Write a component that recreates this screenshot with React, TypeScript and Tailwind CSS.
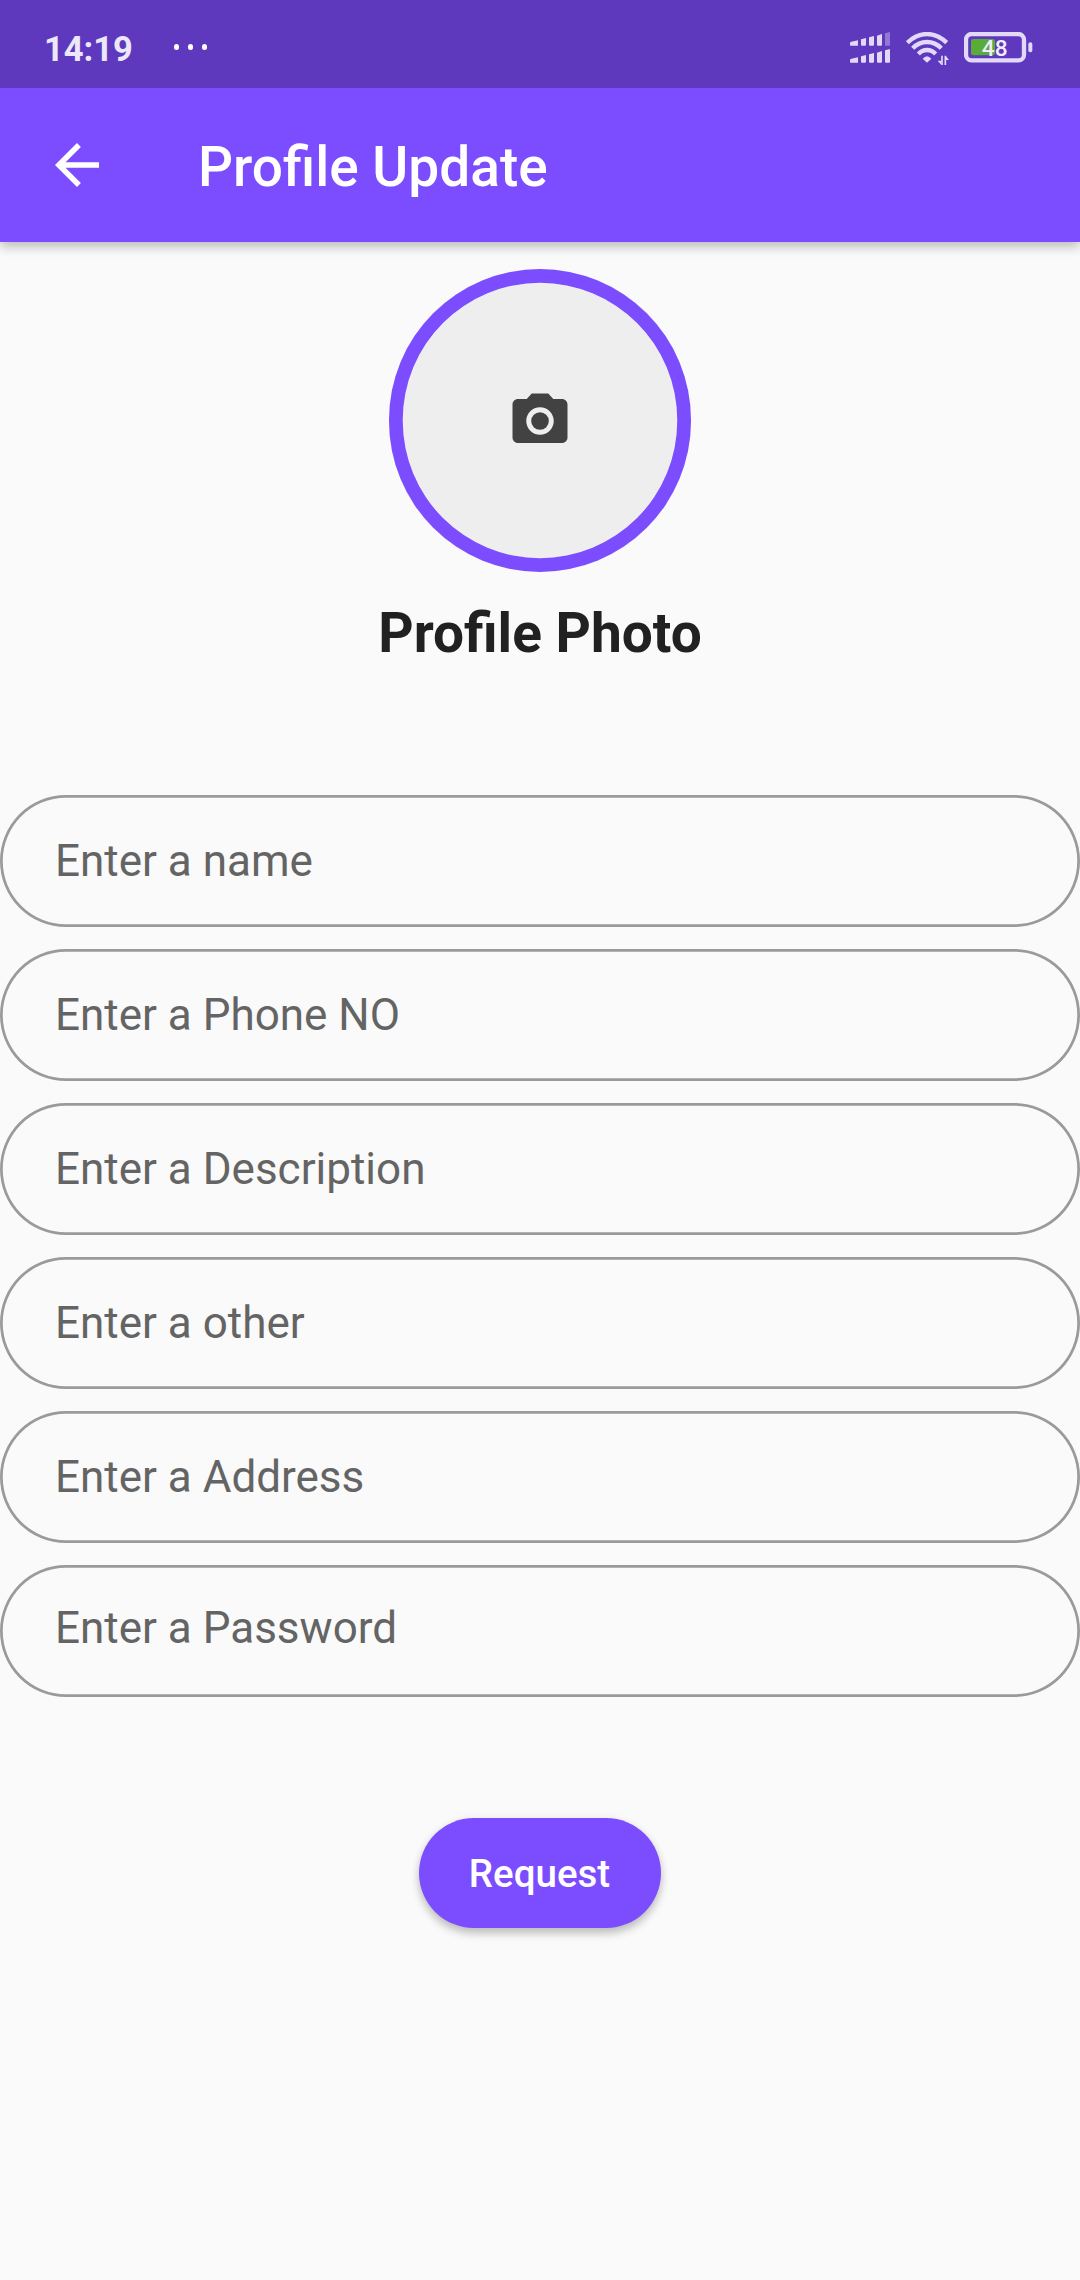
const fields = [
  { label: "Enter a name", type: "text" },
  { label: "Enter a Phone NO", type: "text" },
  { label: "Enter a Description", type: "text" },
  { label: "Enter a other", type: "text" },
  { label: "Enter a Address", type: "text" },
  { label: "Enter a Password", type: "password" },
];

function SignalIcon() {
  return (
    <svg className="h-8 w-10" viewBox="0 0 120 96" fill="#e2d8f8">
      <path d="M0 34q0-4 4-5l20-4v16H2q-2 0-2-2z" />
      <path d="M33 22l15-4v20q0 3-3 3H36q-3 0-3-3z" />
      <path d="M57 16l15-4v26q0 3-3 3H60q-3 0-3-3z" />
      <path d="M81 11l15-5v32q0 3-3 3H84q-3 0-3-3z" />
      <path d="M105 4l15-4v41h-15z" opacity=".4" />
      <path d="M0 85q0-4 4-5l20-4v16H2q-2 0-2-2z" />
      <path d="M33 73l15-4v20q0 3-3 3H36q-3 0-3-3z" />
      <path d="M57 67l15-4v26q0 3-3 3H60q-3 0-3-3z" />
      <path d="M81 62l15-5v32q0 3-3 3H84q-3 0-3-3z" />
      <path d="M105 55l15-4v38q0 3-3 3h-9q-3 0-3-3z" />
    </svg>
  );
}

function WifiIcon() {
  return (
    <svg className="h-[34px] w-11" viewBox="0 0 132 102" fill="none" stroke="#e2d8f8" strokeWidth="13">
      <path d="M4 32Q31 6 63 6t59 26" />
      <path d="M20 49Q38 30 63 30t43 19" />
      <path d="M37 66q11-12 26-12t26 12" />
      <path d="M50 80q13-15 26 0L63 92z" fill="#e2d8f8" stroke="none" />
      <path d="M108 71v28M118 71v28" strokeWidth="5" />
      <path d="M95 86h11v13zM119 71v13h10z" fill="#e2d8f8" stroke="none" />
    </svg>
  );
}

function BatteryIcon() {
  return (
    <svg className="h-[31px] w-[69px]" viewBox="0 0 207 93">
      <rect x="6" y="6" width="174" height="79" rx="17" fill="none" stroke="#e2d8f8" strokeWidth="13" />
      <rect x="21" y="21" width="72" height="49" rx="7" fill="#58ad36" />
      <rect x="193" y="31" width="12" height="30" rx="6" fill="#e2d8f8" />
      <text x="92" y="73" textAnchor="middle" fontFamily="Roboto, sans-serif" fontSize="68" fontWeight="500" fill="#f1ecfc">
        48
      </text>
    </svg>
  );
}

function StatusBar() {
  return (
    <div className="z-10 flex h-[88px] items-start justify-between bg-[#5e39bd] pr-[47px] pl-[44px]">
      <div className="flex items-start">
        <span className="mt-[28px] w-[130px] text-[34.5px] leading-[42px] font-bold text-[#ede7fb]">
          14:19
        </span>
        <div className="mt-[44px] flex gap-[9px]">
          <i className="h-[6px] w-[5px] rounded-full bg-white" />
          <i className="h-[6px] w-[5px] rounded-full bg-white" />
          <i className="h-[6px] w-[5px] rounded-full bg-white" />
        </div>
      </div>
      <div className="mt-[32px] flex items-start">
        <SignalIcon />
        <div className="ml-4">
          <WifiIcon />
        </div>
        <div className="ml-[14px]">
          <BatteryIcon />
        </div>
      </div>
    </div>
  );
}

export default function App() {
  return (
    <div className="flex h-[2280px] w-[1080px] flex-col overflow-hidden bg-[#fafafa] font-['Roboto',sans-serif]">
      <StatusBar />
      <header className="flex h-[154px] items-center bg-[#7c4dff] pl-[44px] shadow-[0_5px_10px_rgba(0,0,0,0.17),0_2px_14px_rgba(0,0,0,0.12)]">
        <button className="flex" aria-label="Back">
          <svg className="size-[66px]" viewBox="0 0 24 24" fill="white">
            <path d="M20 11H7.83l5.59-5.59L12 4l-8 8 8 8 1.41-1.41L7.83 13H20v-2z" />
          </svg>
        </button>
        <h1 className="mt-[3px] ml-[88px] text-[55px] leading-[64px] font-medium text-white">Profile Update</h1>
      </header>

      <main className="flex flex-col items-center">
        <button
          className="mt-[27.25px] flex size-[302.5px] items-center justify-center rounded-full bg-[#eeeeee] shadow-[inset_0_0_0_13.75px_#7c4dff]"
          aria-label="Choose photo"
        >
          <svg className="size-[66px]" viewBox="0 0 24 24" fill="#424242">
            <circle cx="12" cy="12" r="3.2" />
            <path d="M9 2L7.17 4H4c-1.1 0-2 .9-2 2v12c0 1.1.9 2 2 2h16c1.1 0 2-.9 2-2V6c0-1.1-.9-2-2-2h-3.17L15 2H9zm3 15c-2.76 0-5-2.24-5-5s2.24-5 5-5 5 2.24 5 5-2.24 5-5 5z" />
          </svg>
        </button>
        <h2 className="mt-[29.5px] text-[55px] leading-[64px] font-bold text-[#212121]">Profile Photo</h2>

        <form className="mt-[129.5px] flex w-full flex-col gap-[22px]">
          {fields.map((f) => (
            <input
              key={f.label}
              type={f.type}
              placeholder={f.label}
              className="h-[132px] w-full rounded-full px-[55px] text-[44px] shadow-[inset_0_0_0_2.75px_#9a9a9a] placeholder:text-[#646464] placeholder:opacity-100 [&[type=password]]:pb-[6px]"
            />
          ))}
        </form>

        <button className="mt-[121px] flex h-[110px] w-[242px] items-center justify-center rounded-full bg-[#7c4dff] pt-[2px] pr-[1px] text-[38.5px] leading-[46px] font-medium text-white shadow-[0_6px_8px_rgba(0,0,0,0.18),0_2px_10px_rgba(0,0,0,0.1)]">
          Request
        </button>
      </main>
    </div>
  );
}
